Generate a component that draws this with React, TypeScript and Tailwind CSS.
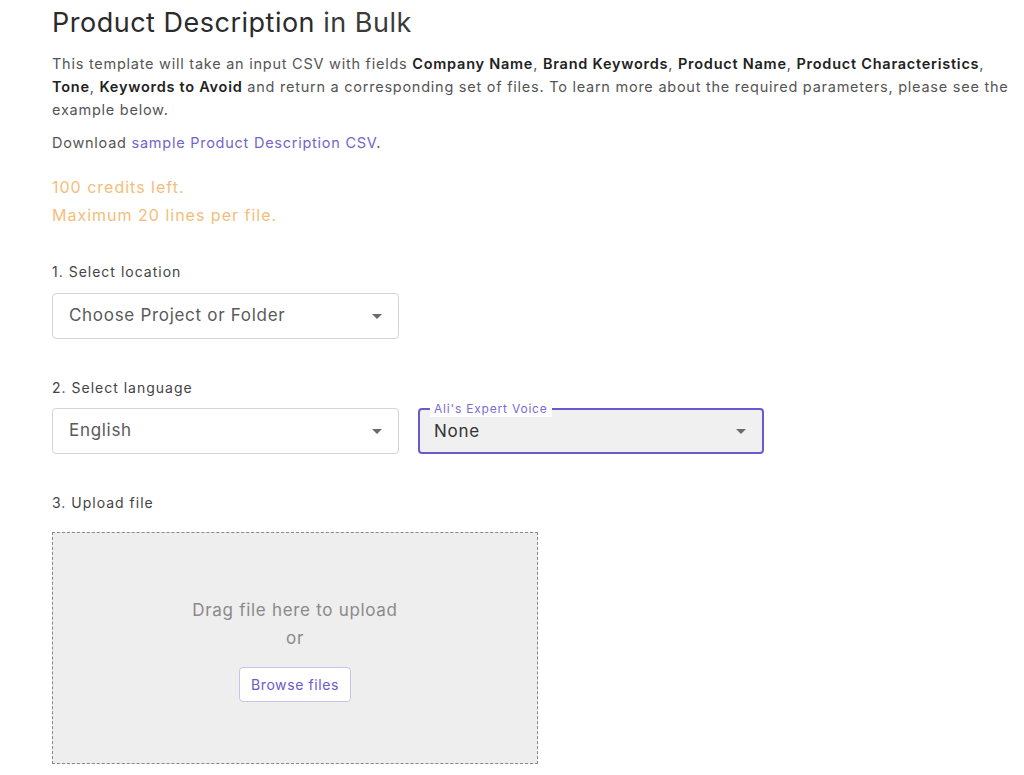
import React from 'react';

function Caret() {
  return (
    <svg width="10" height="5" viewBox="0 0 10 5" className="shrink-0">
      <path d="M0 0 L10 0 L5 5 Z" fill="#6b6b6b" />
    </svg>
  );
}

function SelectBox({ value, className = '' }: { value: string; className?: string }) {
  return (
    <div
      className={`w-[347px] h-[46px] flex items-center justify-between pl-4 pr-4 rounded border border-[#d4d4d4] bg-white ${className}`}
    >
      <span className="text-[17px] tracking-[0.7px] text-[#5a5a5a]">{value}</span>
      <Caret />
    </div>
  );
}

export default function App() {
  return (
    <div className="min-h-[775px] bg-white font-['Inter',sans-serif] pl-[52px] pt-[6px]">
      <h1 className="text-[27px] leading-[34px] text-[#2b2b2b] tracking-[0.5px]">
        Product Description <span className="text-[#3a3a3a]">in Bulk</span>
      </h1>

      <p className="mt-[12px] text-[14.5px] leading-[23px] tracking-[0.75px] text-[#555] pr-[4px]">
        This template will take an input CSV with fields <b className="text-[#222] font-semibold">Company Name</b>,{' '}
        <b className="text-[#222] font-semibold">Brand Keywords</b>, <b className="text-[#222] font-semibold">Product Name</b>,{' '}
        <b className="text-[#222] font-semibold">Product Characteristics</b>, <b className="text-[#222] font-semibold">Tone</b>,{' '}
        <b className="text-[#222] font-semibold">Keywords to Avoid</b> and return a corresponding set of files. To learn more about the
        required parameters, please see the example below.
      </p>

      <p className="mt-[10px] text-[14.5px] leading-[23px] tracking-[0.75px] text-[#555]">
        Download <span className="text-[#7465c9]">sample Product Description CSV</span>.
      </p>

      <div className="mt-[19px] text-[16px] leading-[28px] tracking-[1px] text-[#f4bd7a]">
        <div>100 credits left.</div>
        <div>Maximum 20 lines per file.</div>
      </div>

      <div className="mt-[33px] text-[14px] leading-[20px] tracking-[1px] text-[#444]">1. Select location</div>
      <SelectBox value="Choose Project or Folder" className="mt-[11px]" />

      <div className="mt-[39px] text-[14px] leading-[20px] tracking-[1px] text-[#444]">2. Select language</div>
      <div className="mt-[10px] flex gap-[19px]">
        <SelectBox value="English" />
        <div className="relative w-[346px] h-[46px] flex items-center justify-between pl-[14px] pr-4 rounded border-2 border-[#6a5acd] bg-[#f0f0f0]">
          <span className="absolute -top-[9px] left-[10px] px-[4px] bg-white text-[12px] leading-[16px] tracking-[0.8px] text-[#7a6bd6]">
            Ali's Expert Voice
          </span>
          <span className="text-[17px] tracking-[0.7px] text-[#333] mt-[1px]">None</span>
          <Caret />
        </div>
      </div>

      <div className="mt-[39px] text-[14px] leading-[20px] tracking-[1px] text-[#444]">3. Upload file</div>
      <div className="mt-[19px] w-[486px] h-[232px] border border-dashed border-[#888] bg-[#eeeeee] flex flex-col items-center justify-center">
        <div className="mt-[2px] text-[17px] leading-[28px] tracking-[0.7px] text-[#8a8a8a]">Drag file here to upload</div>
        <div className="text-[17px] leading-[28px] tracking-[0.7px] text-[#8a8a8a]">or</div>
        <button className="mt-[15px] h-[35px] px-[11px] rounded border border-[#c9c3ec] bg-white text-[14px] tracking-[0.6px] text-[#6a5acd]">
          Browse files
        </button>
      </div>
    </div>
  );
}
